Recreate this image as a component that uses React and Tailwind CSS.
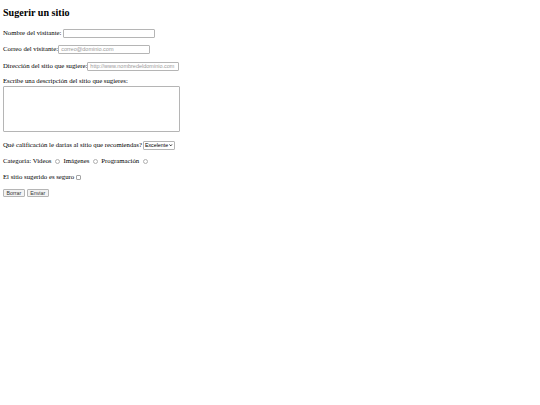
import React from "react";

const inputCls =
  "h-[9px] w-[92px] border border-[#b5b5b5] rounded-[1px] bg-white px-[2px] text-[5.5px] leading-[7px] text-black placeholder:text-[#9a9a9a] outline-none font-['Liberation_Sans',sans-serif]";

const Radio = ({ name }) => (
  <input
    type="radio"
    name={name}
    className="appearance-none w-[5px] h-[5px] rounded-full border border-[#b0b0b0] bg-white mx-[3.5px] shrink-0"
  />
);

const Button = ({ children }) => (
  <button className="h-[8px] px-[2.5px] border border-[#b5b5b5] rounded-[1px] bg-[#f3f3f3] text-[5.3px] leading-[6px] text-[#333] font-['Liberation_Sans',sans-serif]">
    {children}
  </button>
);

export default function App() {
  return (
    <div className="min-h-[405px] w-[540px] bg-white text-black font-['Liberation_Serif',serif] text-[6.75px] leading-[10px] pl-[3px] pt-[7px]">
      <h3 className="text-[10.1px] leading-[12px] font-bold">Sugerir un sitio</h3>

      <form className="flex flex-col">
        {/* datos del visitante */}
        <div className="flex items-center h-[10px] mt-[9px]">
          <span>Nombre del visitante:</span>
          <input className={`${inputCls} ml-[1px]`} type="text" />
        </div>
        <div className="flex items-center h-[10px] mt-[6px]">
          <span>Correo del visitante:</span>
          <input className={inputCls} type="email" placeholder="correo@dominio.com" />
        </div>
        <div className="flex items-center h-[10px] mt-[7px]">
          <span>Dirección del sitio que sugiere:</span>
          <input
            className={inputCls}
            type="url"
            placeholder="http://www.nombredeldominio.com"
          />
        </div>

        {/* descripción */}
        <div className="mt-[6px] h-[8px] leading-[8px]">
          Escribe una descripción del sitio que sugieres:
        </div>
        <textarea className="w-[177px] h-[46px] border border-[#b5b5b5] rounded-[1px] bg-white outline-none resize-none mt-[1px]" />

        {/* calificación */}
        <div className="flex items-center h-[10px] mt-[8px]">
          <span>Qué calificación le darías al sitio que recomiendas?</span>
          <div className="relative ml-[1px]">
            <select className="appearance-none h-[9px] w-[32px] border border-[#b5b5b5] rounded-[1px] bg-white pl-[1px] text-[5.3px] leading-[7px] font-['Liberation_Sans',sans-serif] outline-none">
              <option>Excelente</option>
              <option>Bueno</option>
              <option>Regular</option>
            </select>
            <svg
              className="absolute right-[2px] top-[3.5px] w-[3.5px] h-[2.5px] pointer-events-none"
              viewBox="0 0 8 6"
            >
              <path d="M1 1l3 3.5L7 1" fill="none" stroke="#000" strokeWidth="1.8" />
            </svg>
          </div>
        </div>

        {/* categoría */}
        <div className="flex items-center h-[10px] mt-[6px]">
          <span>Categoría: Videos</span>
          <Radio name="cat" />
          <span>Imágenes</span>
          <Radio name="cat" />
          <span>Programación</span>
          <Radio name="cat" />
        </div>

        <div className="flex items-center h-[10px] mt-[6px]">
          <span>El sitio sugerido es seguro</span>
          <input
            type="checkbox"
            className="appearance-none w-[5px] h-[5px] border border-[#a5a5a5] rounded-[1px] bg-white ml-[1.5px]"
          />
        </div>

        <div className="flex items-center gap-[2px] mt-[7px]">
          <Button>Borrar</Button>
          <Button>Enviar</Button>
        </div>
      </form>
    </div>
  );
}
